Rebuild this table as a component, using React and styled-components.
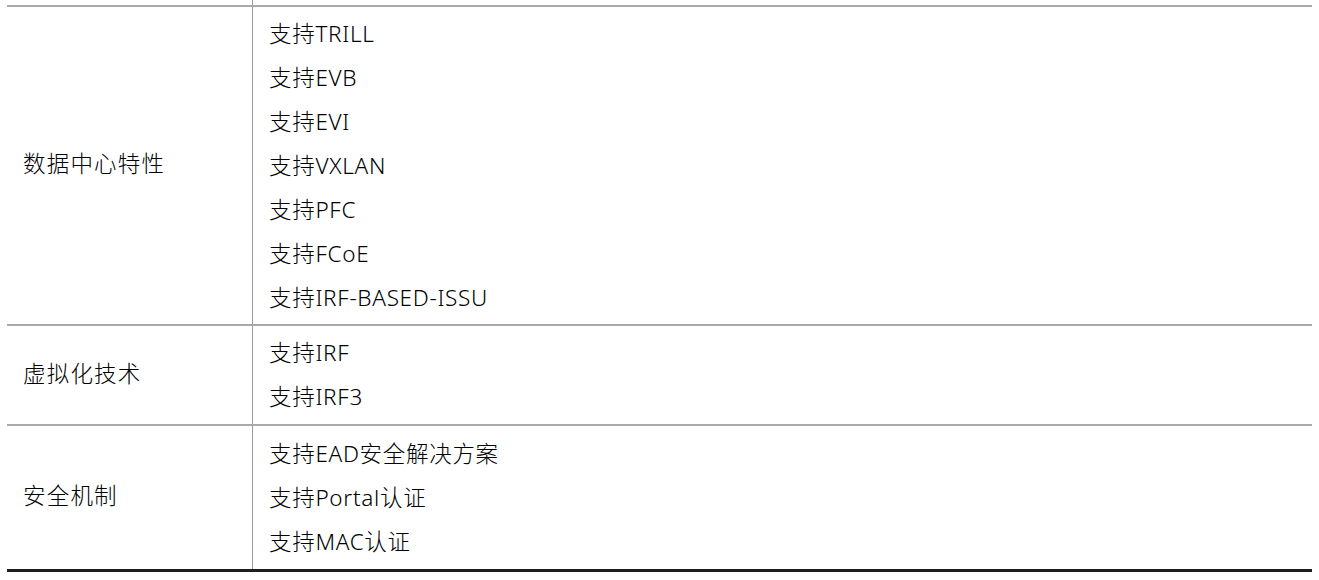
import React from "react";
import styled, { createGlobalStyle } from "styled-components";

const GlobalStyle = createGlobalStyle`
  html, body {
    margin: 0;
    padding: 0;
    background: #ffffff;
  }
  body {
    font-family: "Noto Sans", "Noto Sans CJK SC", sans-serif;
    color: #000000;
  }
`;

const rows = [
  {
    label: "数据中心特性",
    items: [
      "支持TRILL",
      "支持EVB",
      "支持EVI",
      "支持VXLAN",
      "支持PFC",
      "支持FCoE",
      "支持IRF-BASED-ISSU",
    ],
  },
  { label: "虚拟化技术", items: ["支持IRF", "支持IRF3"] },
  {
    label: "安全机制",
    items: ["支持EAD安全解决方案", "支持Portal认证", "支持MAC认证"],
  },
];

const Table = styled.div`
  width: 1305px;
  margin-left: 7px;
  border-bottom: 3px solid #1e1e1e;
`;

const Row = styled.div`
  display: grid;
  grid-template-columns: 246px 1fr;
  border-top: 2px solid #a9a9a9;
`;

const LabelCell = styled.div`
  display: flex;
  align-items: center;
  padding: 0 0 6px 16px;
  border-right: 1px solid #9a9a9a;
  font-size: 22.5px;
  font-weight: 300;
  letter-spacing: 1.2px;
`;

const ItemsCell = styled.div`
  display: flex;
  flex-direction: column;
  padding: ${(p) => p.$pad}px 16px;
`;

const Item = styled.div`
  height: 44px;
  line-height: 44px;
  font-size: 22.5px;
  font-weight: 300;
  letter-spacing: 0.7px;
  white-space: nowrap;
`;

const Tail = styled.div`
  height: 5px;
  display: grid;
  grid-template-columns: 246px 1fr;
`;

const TailLeft = styled.div`
  border-right: 1px solid #9a9a9a;
`;

export default function App() {
  const pads = [4.5, 5, 5.5];
  return (
    <>
      <GlobalStyle />
      <Table>
        <Tail>
          <TailLeft />
          <div />
        </Tail>
        {rows.map((row, i) => (
          <Row key={row.label}>
            <LabelCell>{row.label}</LabelCell>
            <ItemsCell $pad={pads[i]}>
              {row.items.map((it) => (
                <Item key={it}>{it}</Item>
              ))}
            </ItemsCell>
          </Row>
        ))}
      </Table>
    </>
  );
}
